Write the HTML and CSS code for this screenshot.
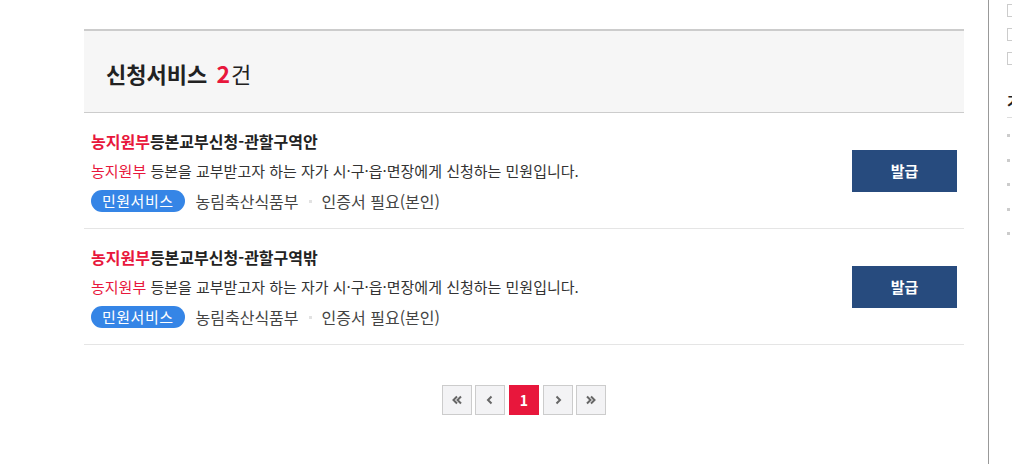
FILE: index.html
```html
<!DOCTYPE html>
<html lang="ko">
<head>
  <meta charset="UTF-8">
  <title>신청서비스</title>
  <link rel="stylesheet" href="styles.css">
</head>
<body>
  <div class="layout">
    <div class="main">
      <div class="result-head">
        <h2>신청서비스 <em>2</em><span>건</span></h2>
      </div>

      <ul class="service-list">
        <li class="service">
          <div class="info">
            <p class="name"><mark>농지원부</mark>등본교부신청-관할구역안</p>
            <p class="desc"><mark>농지원부</mark> 등본을 교부받고자 하는 자가 시·구·읍·면장에게 신청하는 민원입니다.</p>
            <div class="meta">
              <span class="badge">민원서비스</span>
              <span class="org">농림축산식품부</span>
              <span class="dot"></span>
              <span class="need">인증서 필요(본인)</span>
            </div>
          </div>
          <a class="btn-issue" href="#">발급</a>
        </li>
        <li class="service">
          <div class="info">
            <p class="name"><mark>농지원부</mark>등본교부신청-관할구역밖</p>
            <p class="desc"><mark>농지원부</mark> 등본을 교부받고자 하는 자가 시·구·읍·면장에게 신청하는 민원입니다.</p>
            <div class="meta">
              <span class="badge">민원서비스</span>
              <span class="org">농림축산식품부</span>
              <span class="dot"></span>
              <span class="need">인증서 필요(본인)</span>
            </div>
          </div>
          <a class="btn-issue" href="#">발급</a>
        </li>
      </ul>

      <div class="paging">
        <a class="pg" href="#"><svg width="10" height="10" viewBox="0 0 10 10"><polyline points="5,1.5 1.5,5 5,8.5"/><polyline points="9,1.5 5.5,5 9,8.5"/></svg></a>
        <a class="pg" href="#"><svg width="10" height="10" viewBox="0 0 10 10"><polyline points="6.5,1.5 3,5 6.5,8.5"/></svg></a>
        <strong class="pg active">1</strong>
        <a class="pg" href="#"><svg width="10" height="10" viewBox="0 0 10 10"><polyline points="3.5,1.5 7,5 3.5,8.5"/></svg></a>
        <a class="pg" href="#"><svg width="10" height="10" viewBox="0 0 10 10"><polyline points="1,1.5 4.5,5 1,8.5"/><polyline points="5,1.5 8.5,5 5,8.5"/></svg></a>
      </div>
    </div>

    <div class="side">
      <div class="filters">
        <span class="chk"></span>
        <span class="chk"></span>
        <span class="chk"></span>
      </div>
      <h3>기관별</h3>
      <ul class="side-list">
        <li></li>
        <li></li>
        <li></li>
        <li></li>
        <li></li>
      </ul>
    </div>
  </div>
</body>
</html>
```

FILE: styles.css
```css
* {
  margin: 0;
  padding: 0;
  box-sizing: border-box;
}

html, body {
  overflow: hidden;
}

body {
  font-family: "Noto Sans CJK KR", "Noto Sans", sans-serif;
  color: #333;
  background: #fff;
}

ul {
  list-style: none;
}

a {
  text-decoration: none;
}

.layout {
  display: flex;
  min-height: 464px;
}

.main {
  flex: 0 0 880px;
  margin-left: 84px;
  padding-top: 29px;
}

/* result heading */
.result-head {
  height: 84px;
  border-top: 2px solid #ccc;
  border-bottom: 1px solid #ccc;
  background: #f6f6f6;
  padding: 0 22px;
  display: flex;
  align-items: center;
}

.result-head h2 {
  font-size: 22px;
  font-weight: 700;
  color: #222;
  line-height: 30px;
  margin-top: 2px;
}

.result-head em {
  font-style: normal;
  color: #e8173c;
  margin-left: 3px;
  font-size: 23px;
}

.result-head span {
  font-weight: 400;
  margin-left: 1px;
}

/* service rows */
.service {
  display: flex;
  align-items: center;
  justify-content: space-between;
  padding: 16px 7px;
  border-bottom: 1px solid #e5e5e5;
}

.service mark {
  background: none;
  color: #e8173c;
}

.name {
  font-size: 16px;
  font-weight: 700;
  line-height: 24px;
  color: #222;
}

.desc {
  font-size: 15px;
  line-height: 20px;
  margin-top: 8px;
  color: #333;
}

.meta {
  display: flex;
  align-items: center;
  height: 22px;
  line-height: 22px;
  margin-top: 9px;
  font-size: 16px;
  color: #444;
}

.badge {
  display: inline-block;
  height: 22px;
  line-height: 22px;
  padding: 0 11px;
  border-radius: 11px;
  background: #3585e6;
  color: #fff;
  font-size: 15px;
  letter-spacing: 0.5px;
}

.org {
  margin-left: 11px;
}

.dot {
  width: 3px;
  height: 3px;
  background: #e2e2e2;
  margin: 0 10px;
}

.btn-issue {
  width: 105px;
  height: 42px;
  line-height: 42px;
  text-align: center;
  background: #274b7e;
  color: #fff;
  font-size: 15px;
  font-weight: 700;
}

/* paging */
.paging {
  display: flex;
  justify-content: center;
  gap: 3px;
  margin-top: 40px;
}

.pg {
  width: 30px;
  height: 30px;
  border: 1px solid #ccc;
  background: #f3f3f5;
  display: flex;
  align-items: center;
  justify-content: center;
}

.pg svg polyline {
  fill: none;
  stroke: #666;
  stroke-width: 2;
}

.pg.active {
  margin: 0 1px;
  border-color: #e8173c;
  background: #e8173c;
  color: #fff;
  font-size: 14px;
  font-weight: 700;
}

/* right sidebar */
.side {
  flex: 0 0 220px;
  margin-left: 24px;
  border-left: 1px solid #999;
  padding-left: 18px;
}

.filters {
  display: flex;
  flex-direction: column;
  gap: 11px;
  padding-top: 4px;
}

.chk {
  width: 13px;
  height: 13px;
  border: 1px solid #ccc;
}

.side h3 {
  margin-top: 25px;
  font-size: 15px;
  line-height: 22px;
  color: #222;
  padding-bottom: 5px;
  border-bottom: 1px solid #ddd;
}

.side-list {
  padding-top: 5px;
}

.side-list li {
  height: 24.5px;
  position: relative;
}

.side-list li::before {
  content: "";
  position: absolute;
  left: 0;
  top: 11px;
  width: 3px;
  height: 3px;
  background: #ccc;
}
```
